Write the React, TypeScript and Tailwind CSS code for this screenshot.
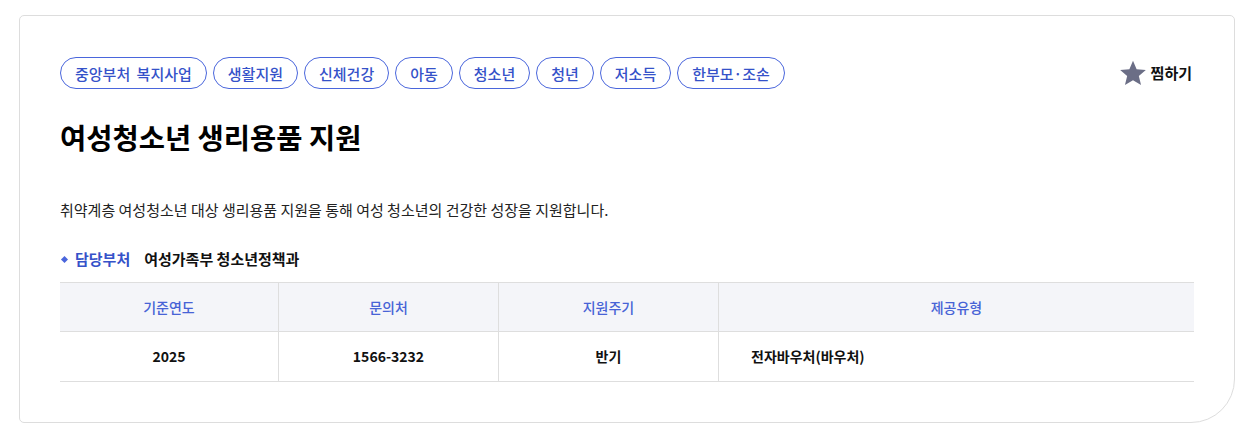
import React from "react";

const tags = ["중앙부처 복지사업", "생활지원", "신체건강", "아동", "청소년", "청년", "저소득", "한부모·조손"];

export default function App() {
  return (
    <div className="w-[1244px] h-[439px] bg-white pt-[15px] pl-[19px]" style={{ fontFamily: '"Noto Sans CJK KR", "Noto Sans", sans-serif' }}>
      <div className="w-[1216px] h-[408px] border border-[#dddddd] rounded-tl-[5px] rounded-tr-[5px] rounded-bl-[5px] rounded-br-[44px] px-[40px] pt-[41px]">
        <div className="flex items-center justify-between h-[32px]">
          <div className="flex gap-[6px]">
            {tags.map((t) => (
              <span key={t} className="h-[32px] flex items-center px-[14px] rounded-full border border-[#4a66dc] text-[15px] font-medium text-[#3552c9] leading-none [word-spacing:3px]">
                {t}
              </span>
            ))}
          </div>
          <div className="flex items-center gap-[4px] mr-[2px]">
            <svg width="28" height="28" viewBox="0 0 24 24">
              <path d="M12 1.5l3.1 7.3 7.9.6-6 5.2 1.9 7.7L12 18.2l-6.9 4.1 1.9-7.7-6-5.2 7.9-.6z" fill="#6b6e86" />
            </svg>
            <span className="text-[15px] font-bold text-[#111]">찜하기</span>
          </div>
        </div>
        <h1 className="mt-[28px] text-[28.5px] leading-[40px] font-bold text-black">여성청소년 생리용품 지원</h1>
        <p className="mt-[41px] text-[15px] leading-[24px] text-[#222]">
          취약계층 여성청소년 대상 생리용품 지원을 통해 여성 청소년의 건강한 성장을 지원합니다.
        </p>
        <div className="mt-[25px] flex items-center h-[24px] text-[15px]">
          <span className="w-[5px] h-[5px] bg-[#4a66dc] rotate-45 ml-[2px] mr-[8px]" />
          <span className="font-semibold text-[#3552c9]">담당부처</span>
          <span className="ml-[14px] font-semibold text-[#111]">여성가족부 청소년정책과</span>
        </div>
        <div className="mt-[11px] border-t border-b border-[#dedede]">
          <div className="flex h-[49px] bg-[#f4f5f9] border-b border-[#dedede] text-[14px] font-medium text-[#4763d6]">
            <div className="w-[219px] flex items-center justify-center border-r border-[#dedede]">기준연도</div>
            <div className="w-[220px] flex items-center justify-center border-r border-[#dedede]">문의처</div>
            <div className="w-[220px] flex items-center justify-center border-r border-[#dedede]">지원주기</div>
            <div className="flex-1 flex items-center justify-center">제공유형</div>
          </div>
          <div className="flex h-[49px] text-[14px] font-semibold text-[#111]">
            <div className="w-[219px] flex items-center justify-center border-r border-[#dedede]">2025</div>
            <div className="w-[220px] flex items-center justify-center border-r border-[#dedede]">1566-3232</div>
            <div className="w-[220px] flex items-center justify-center border-r border-[#dedede]">반기</div>
            <div className="flex-1 flex items-center pl-[32px]">전자바우처(바우처)</div>
          </div>
        </div>
      </div>
    </div>
  );
}
